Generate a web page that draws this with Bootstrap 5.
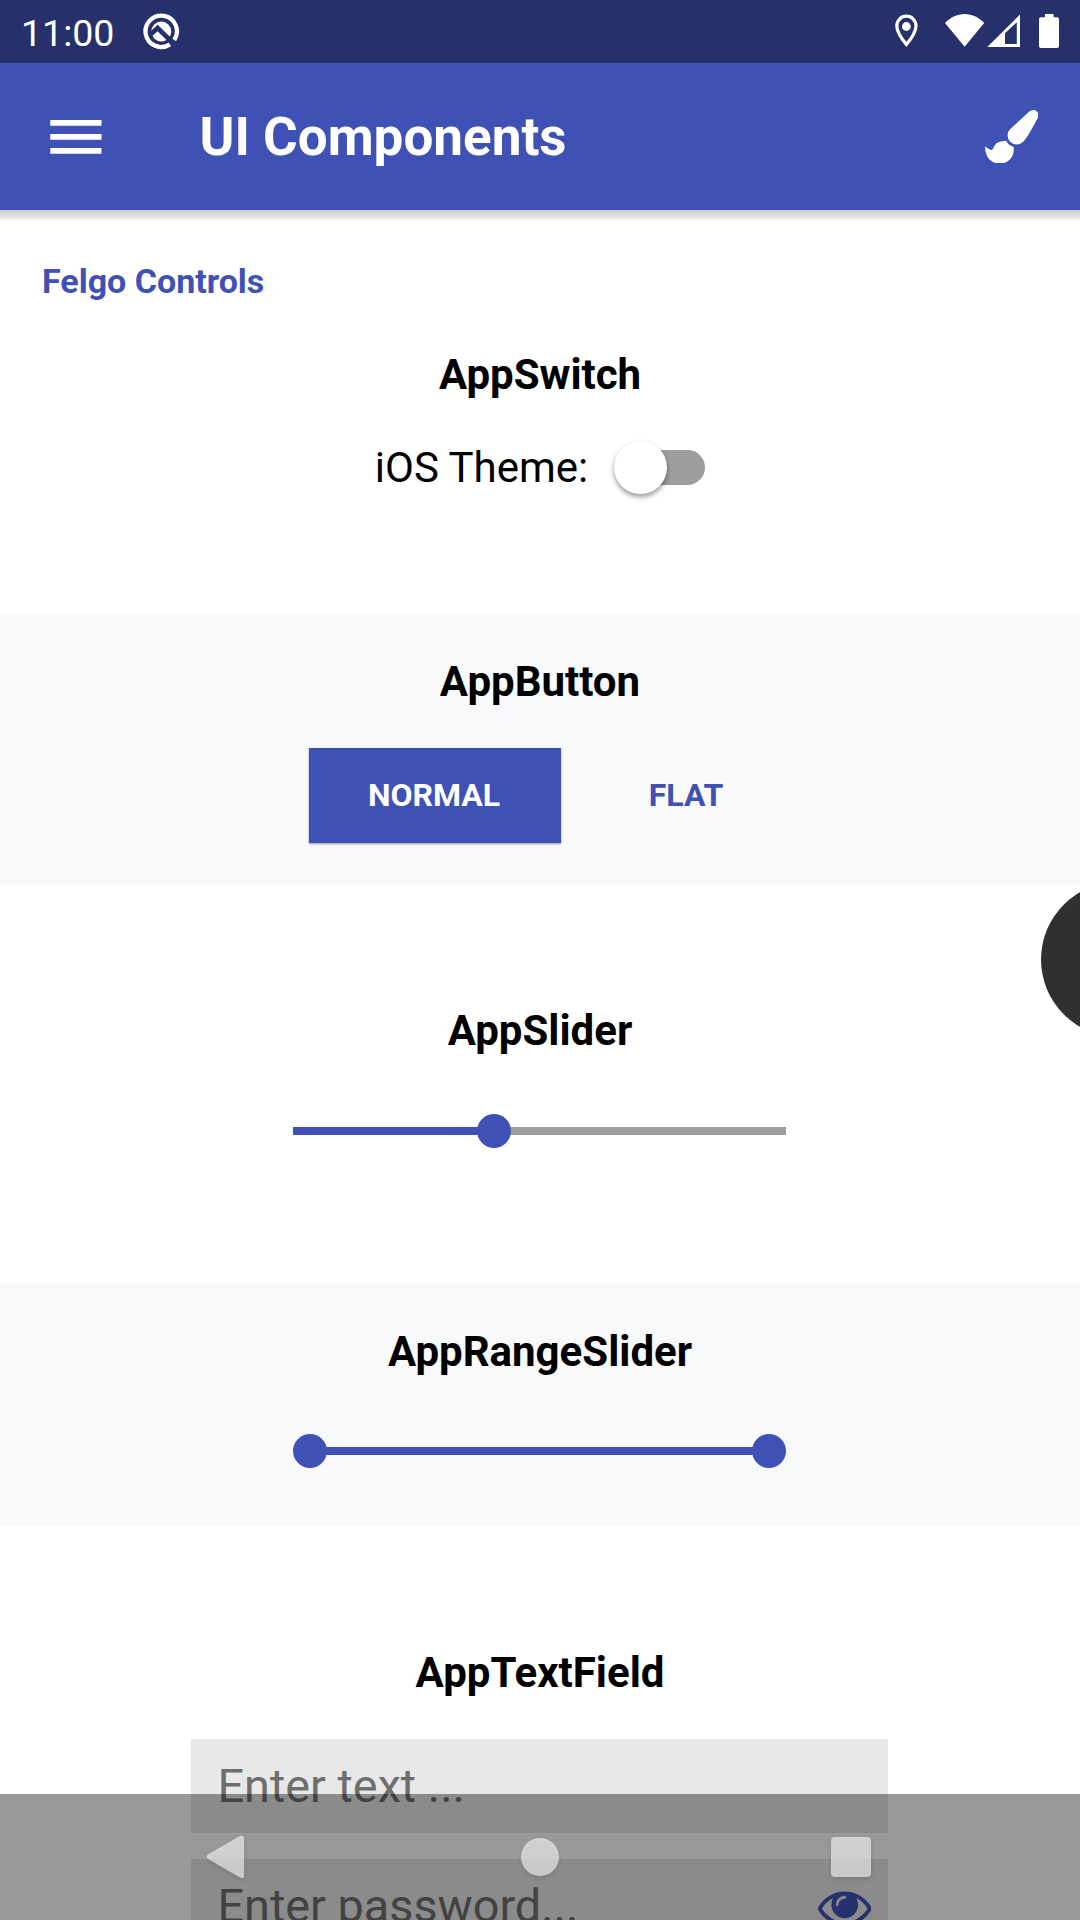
<!DOCTYPE html>
<html lang="en">
<head>
<meta charset="utf-8">
<meta name="viewport" content="width=device-width, initial-scale=1">
<title>UI Components</title>
<link href="https://cdn.jsdelivr.net/npm/bootstrap@5.3.0/dist/css/bootstrap.min.css" rel="stylesheet">
<style>
  :root { --brand: #3f51b5; --track: #9e9e9e; }
  body { font-family: Roboto, sans-serif; color: #000; background: #fff; }
  .phone { width: 1080px; height: 1920px; }
  .status-bar { height: 63px; background: #26306b; padding: 0 21px; }
  .status-time { font-size: 37.5px; line-height: 66px; width: 122px; }
  .status-q { margin-top: 13px; }
  .status-icons { margin-top: 13px; }
  .app-bar { height: 147px; background: var(--brand); padding: 0 42px 0 50px; z-index: 2; }
  .app-bar::after { content: ""; position: absolute; left: 0; right: 0; top: 100%; height: 13px;
    background: linear-gradient(#c9c9c9, #dcdcdc 40%, #f6f6f6 80%, #fff); }
  .app-title { font-size: 53px; line-height: 60px; margin-left: 97.5px; font-weight: 700; }
  .group-label { font-size: 34px; line-height: 40px; color: var(--brand); padding: 51px 0 0 42px; }
  .section-title { font-size: 42px; line-height: 52px; height: 50px; font-weight: 700; margin: 0; }
  .sec-switch { height: 404px; }
  .sec-switch .section-title { margin-top: 48px; }
  .sec-button { height: 271px; padding-top: 42px; }
  .sec-slider { height: 399px; padding-top: 120px; }
  .sec-range { height: 242px; padding-top: 42px; }
  .sec-text { height: 394px; padding-top: 121px; }
  .tinted { background: #f8f9fb; }
  .switch-row { margin-top: 43px; height: 50px; }
  .switch-label { font-size: 42px; line-height: 50px; padding-top: 1px; }
  .toggle { width: 91px; height: 53px; margin-left: 26px; }
  .toggle-track { width: 80px; height: 35px; background: var(--track); }
  .toggle-knob { width: 53px; height: 53px; left: 0; top: 0; background: #fff; box-shadow: 0 3px 5px rgba(0,0,0,.4); }
  .btn-row { margin-top: 42px; padding-left: 18px; }
  .btn-flat-md { height: 95px; border: 0; border-radius: 0; font-size: 32px; font-weight: 700; padding: 0 2px 2px 0; }
  .btn-normal { width: 252px; background: var(--brand); color: #fff; box-shadow: 0 1px 2px rgba(0,0,0,.4); }
  .btn-ghost { width: 204px; margin-left: 24px; color: var(--brand); }
  .slider-wrap { padding-right: 1px; }
  .slider { width: 493px; height: 34px; margin-top: 59px; }
  .sec-range .slider { margin-top: 58px; }
  .slider-line { height: 8px; background: var(--track); }
  .fill { background: var(--brand); }
  .knob { width: 34px; height: 34px; background: var(--brand); margin: 0 -1px; z-index: 1; }
  .fields { margin-top: 42px; padding-right: 1px; }
  .field { width: 697px; height: 94px; background: #e8e8e8; padding: 1px 17px 0 26.5px; font-size: 46.8px; color: #6e6e6e; }
  .field + .field { margin-top: 26px; }
  .bubble { width: 155px; height: 155px; left: 1040.5px; top: 882px; background: #303030; }
  .nav-keys { height: 126px; background: rgba(0,0,0,.4); z-index: 5; }
  .nav-keys svg { filter: drop-shadow(0 2px 2px rgba(0,0,0,.2)); }
</style>
</head>
<body>
<div class="phone position-relative overflow-hidden">
  <div class="status-bar d-flex align-items-start text-white">
    <span class="status-time">11:00</span>
    <svg class="status-q" width="38" height="38" viewBox="0 0 38 38" fill="none">
      <path d="M27.600 32 A15.700 15.700 0 1 1 32 27.600" transform="translate(-.7 -.6)" stroke="#fff" stroke-width="4.300"/>
      <circle cx="18.300" cy="18.500" r="10" fill="#fff"/>
      <path d="M7 22 L14.600 15 L31.500 31.500" stroke="#26306b" stroke-width="4.600"/>
    </svg>
    <div class="status-icons ms-auto d-flex">
      <svg width="164" height="36" viewBox="895 13 164 36" fill="#fff">
        <path fill="none" stroke="#fff" stroke-width="3.200" d="M906.400 16.200c-5.400 0-9.600 4.300-9.600 9.700 0 6.800 9.600 18.600 9.600 18.600s9.600-11.800 9.600-18.600c0-5.400-4.200-9.700-9.600-9.700z"/>
        <circle cx="906.400" cy="26.500" r="4.400"/>
        <path d="M945 23c5-5.200 12-9 19.600-9s14.600 3.800 19.600 9l-19.600 23.700z"/>
        <path fill-rule="evenodd" d="M987.300 47L1020 14.500V47zM1005 33.200V44h11.800V22.200z"/>
        <path d="M1045 14h8.600v3.200h3.400q2 0 2 2V46q0 2-2 2h-16q-2 0-2-2V19.200q0-2 2-2h4z"/>
      </svg>
    </div>
  </div>

  <nav class="app-bar navbar flex-nowrap justify-content-start position-relative text-white">
    <svg width="52" height="34" viewBox="0 0 52 34" fill="#fff"><path d="M.3 0h51.200v5.800H.3zM.3 14h51.200v5.800H.3zM.3 28h51.200v5.800H.3z"/></svg>
    <span class="app-title">UI Components</span>
    <svg class="ms-auto" width="53.500" height="53.500" viewBox="0 0 1792 1792" fill="#fff"><path d="M1615 0q70 0 122.500 46.500T1790 163q0 63-45 151q-332 629-465 752q-97 91-218 91q-126 0-216.500-92.500T755 845q0-128 92-212L1485 54q59-54 130-54zM706 1034q39 76 106.500 130T963 1240l1 71q4 213-129.500 347T486 1792q-123 0-218-46.500T115.500 1618T29 1434T0 1215q7 5 41 30t62 44.500t59 36.500t46 17q41 0 55-37q25-66 57.500-112.500t69.500-76t88-47.500t103-25.500t125-10.500z"/></svg>
  </nav>

  <main>
    <section class="sec-switch">
      <div class="group-label fw-bold">Felgo Controls</div>
      <h2 class="section-title text-center">AppSwitch</h2>
      <div class="switch-row d-flex justify-content-center align-items-center">
        <span class="switch-label">iOS Theme:</span>
        <div class="toggle position-relative d-flex align-items-center justify-content-end">
          <div class="toggle-track rounded-pill"></div>
          <div class="toggle-knob rounded-circle position-absolute"></div>
        </div>
      </div>
    </section>

    <section class="sec-button tinted">
      <h2 class="section-title text-center">AppButton</h2>
      <div class="btn-row d-flex justify-content-center">
        <button class="btn btn-flat-md btn-normal">NORMAL</button>
        <button class="btn btn-flat-md btn-ghost">FLAT</button>
      </div>
    </section>

    <section class="sec-slider">
      <h2 class="section-title text-center">AppSlider</h2>
      <div class="slider-wrap d-flex justify-content-center">
        <div class="slider d-flex align-items-center">
          <div class="slider-line fill" style="width:185px"></div>
          <div class="knob rounded-circle flex-shrink-0"></div>
          <div class="slider-line flex-grow-1"></div>
        </div>
      </div>
    </section>

    <section class="sec-range tinted">
      <h2 class="section-title text-center">AppRangeSlider</h2>
      <div class="slider-wrap d-flex justify-content-center">
        <div class="slider d-flex align-items-center">
          <div class="knob rounded-circle flex-shrink-0 ms-0"></div>
          <div class="slider-line fill flex-grow-1"></div>
          <div class="knob rounded-circle flex-shrink-0 me-0"></div>
        </div>
      </div>
    </section>

    <section class="sec-text">
      <h2 class="section-title text-center">AppTextField</h2>
      <div class="fields d-flex flex-column align-items-center">
        <div class="field d-flex align-items-center">Enter text ...</div>
        <div class="field d-flex align-items-center justify-content-between">
          <span>Enter password...</span>
          <svg width="53.500" height="53.500" viewBox="0 0 1792 1792" fill="#3f51b5"><path d="M1664 960q-152-236-381-353 61 104 61 225 0 185-131.500 316.500t-316.500 131.500-316.500-131.500-131.500-316.500q0-121 61-225-229 117-381 353 133 205 333.500 326.500t434.500 121.500 434.500-121.500 333.500-326.500zm-720-384q0-20-14-34t-34-14q-125 0-214.500 89.500t-89.500 214.500q0 20 14 34t34 14 34-14 14-34q0-86 61-147t147-61q20 0 34-14t14-34zm848 384q0 34-20 69-140 230-376.500 368.500t-499.500 138.500-499.500-139-376.500-368q-20-35-20-69t20-69q140-229 376.500-368t499.500-139 499.500 139 376.500 368q20 35 20 69z"/></svg>
        </div>
      </div>
    </section>
  </main>

  <div class="bubble rounded-circle position-absolute"></div>

  <div class="nav-keys position-absolute bottom-0 start-0 w-100 d-flex justify-content-center">
    <svg width="1080" height="126" viewBox="0 0 1080 126" fill="#fff" fill-opacity=".6">
      <path d="M208 60.500L239 42.500Q244 40 244 45V81Q244 86 239 83L208 65Q205 62.700 208 60.500Z"/>
      <circle cx="540" cy="63" r="19"/>
      <rect x="831" y="43" width="40" height="40" rx="4"/>
    </svg>
  </div>
</div>
<script src="https://cdn.jsdelivr.net/npm/bootstrap@5.3.0/dist/js/bootstrap.bundle.min.js"></script>
</body>
</html>
